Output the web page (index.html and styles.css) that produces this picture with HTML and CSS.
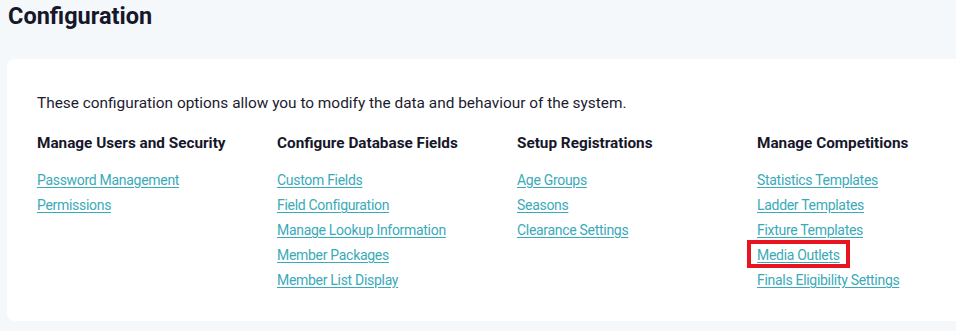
FILE: index.html
```html
<!DOCTYPE html>
<html lang="en">
<head>
  <meta charset="UTF-8" />
  <title>Configuration</title>
  <link rel="stylesheet" href="styles.css">
</head>
<body>
  <h1 class="page-title">Configuration</h1>

  <div class="card">
    <p class="intro">These configuration options allow you to modify the data and behaviour of the system.</p>

    <div class="columns">
      <div class="column">
        <h3>Manage Users and Security</h3>
        <ul>
          <li><a href="#">Password Management</a></li>
          <li><a href="#">Permissions</a></li>
        </ul>
      </div>

      <div class="column">
        <h3>Configure Database Fields</h3>
        <ul>
          <li><a href="#">Custom Fields</a></li>
          <li><a href="#">Field Configuration</a></li>
          <li><a href="#">Manage Lookup Information</a></li>
          <li><a href="#">Member Packages</a></li>
          <li><a href="#">Member List Display</a></li>
        </ul>
      </div>

      <div class="column">
        <h3>Setup Registrations</h3>
        <ul>
          <li><a href="#">Age Groups</a></li>
          <li><a href="#">Seasons</a></li>
          <li><a href="#">Clearance Settings</a></li>
        </ul>
      </div>

      <div class="column">
        <h3>Manage Competitions</h3>
        <ul>
          <li><a href="#">Statistics Templates</a></li>
          <li><a href="#">Ladder Templates</a></li>
          <li><a href="#">Fixture Templates</a></li>
          <li><a href="#" class="highlight">Media Outlets</a></li>
          <li><a href="#">Finals Eligibility Settings</a></li>
        </ul>
      </div>
    </div>
  </div>
</body>
</html>
```

FILE: styles.css
```css
body {
  margin: 0;
  padding: 0 0 12px 8px;
  background: #f5f8fb;
  color: #1b1b2f;
  font-family: "Roboto", "Liberation Sans", sans-serif;
  overflow: hidden;
}

.page-title {
  margin: 0;
  padding-top: 2px;
  font-size: 23.5px;
  font-weight: 700;
  line-height: 28px;
  color: #17172b;
}

.card {
  margin-top: 29px;
  margin-right: -20px;
  margin-left: -1px;
  background: #fff;
  border-radius: 8px;
  padding: 34px 30px 26px 30px;
}

.intro {
  margin: 0 0 20px;
  font-size: 15.4px;
  line-height: 20px;
  color: #1b1b2f;
}

.columns {
  display: grid;
  grid-template-columns: repeat(4, 240px);
}

.column h3 {
  margin: 0 0 17px;
  font-size: 15.3px;
  line-height: 20px;
  font-weight: 700;
  color: #17172b;
}

.column ul {
  list-style: none;
  margin: 0;
  padding: 0;
}

.column li {
  height: 25px;
  line-height: 20px;
}

.column a {
  font-size: 14px;
  letter-spacing: -0.3px;
  color: #3aaab9;
  text-decoration: underline;
  text-underline-offset: 2px;
}

.column a.highlight {
  padding: 2px 5px 0;
  margin: 0 -5px;
  outline: 4px solid #e8141f;
  outline-offset: 1px;
}
```
